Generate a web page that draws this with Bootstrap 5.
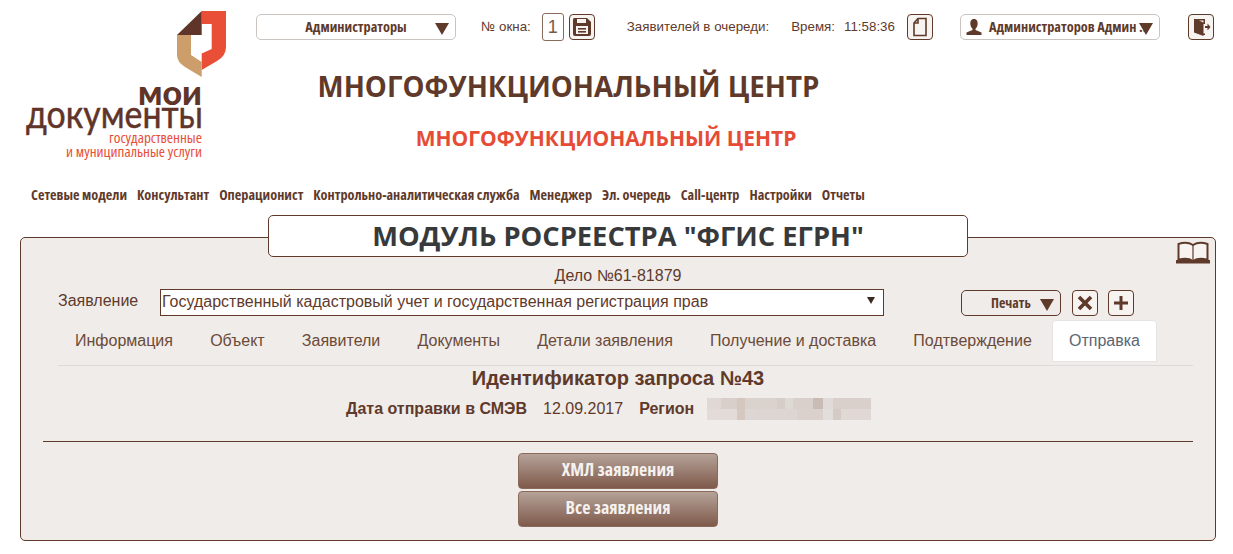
<!DOCTYPE html>
<html lang="ru">
<head>
  <meta charset="UTF-8">
  <title>Модуль Росреестра</title>
  <link href="https://cdn.jsdelivr.net/npm/bootstrap@5.3.3/dist/css/bootstrap.min.css" rel="stylesheet">
  <style>
    body { font-family: "Liberation Sans", Arial, sans-serif; color: #5f3a2b; background: #fff; font-size: 16px; }
    .narrow { font-family: "Open Sans", sans-serif; font-stretch: 75%; font-weight: 700; }
    .page-head { height: 185px; }
    .logo-box { width: 256px; flex: none; }
    .logo-box svg { display: block; }
    .logo-mark { font-family: "Lato", sans-serif; fill: #5f3429; }
    .logo-small { font-family: "Open Sans", sans-serif; font-stretch: 75%; font-size: 14px; fill: #e94e36; }
    .head-main { width: 958px; flex: none; }
    .top-bar { height: 28px; margin-top: 13px; font-size: 13.35px; }
    .drop-box { height: 26px; border: 1px solid #c9c4c0; border-radius: 5px; background: #fff; color: #5f3a2b; font-size: 14.3px; line-height: 24px; }
    .drop-group { width: 200px; text-align: center; }
    .drop-user { width: 200px; margin-left: 27px; padding-left: 4px; }
    .tri { width: 0; height: 0; border-left: 7px solid transparent; border-right: 7px solid transparent; border-top: 12px solid #5f3a2b; }
    .tri-pos { position: absolute; top: 8px; right: 6px; }
    .icon-btn { width: 26px; height: 26px; padding: 0; border: 1px solid #5f3a2b; border-radius: 4px; background: #f6f3f1; display: flex; align-items: center; justify-content: center; flex: none; }
    .win-label { margin-left: 25px; }
    .win-num { width: 22px; height: 28px; margin-left: 11px; border: 1px solid #8a6a5a; border-radius: 3px; font-size: 18px; line-height: 26px; text-align: center; color: #7a5a49; }
    .save-btn { margin-left: 5px; }
    .queue-label { margin-left: 32px; }
    .time-label { margin-left: 22px; }
    .time-value { margin-left: 9px; }
    .doc-btn { margin-left: 12px; }
    .user-name { margin-left: 6px; }
    .exit-btn { margin-left: 28px; }
    .h-main { font-family: "Open Sans", sans-serif; font-weight: 700; font-size: 27.7px; line-height: 36px; margin: 27px 0 0 0; width: 625px; text-align: center; color: #5f3a2b; }
    .h-sub { font-family: "Open Sans", sans-serif; font-weight: 700; font-size: 21px; line-height: 28px; margin: 20px 0 0 0; width: 700px; text-align: center; color: #e64c35; }
    .main-menu { padding-left: 31px; gap: 10px; font-size: 14.25px; line-height: 20px; height: 30px; }
    .main-menu a { color: #5f3a2b; text-decoration: none; }
    .title-box { width: 700px; height: 42px; margin: 0 0 -20px 268px; position: relative; z-index: 2; background: #fff; border: 1px solid #5f3a2b; border-radius: 5px; font-family: "Open Sans", sans-serif; font-weight: 700; font-size: 27.3px; line-height: 40px; text-align: center; color: #37393b; }
    .work-panel { width: 1196px; height: 304px; margin-left: 20px; background: #f0ece9; border: 1px solid #5f3a2b; border-radius: 5px; position: relative; padding-top: 28px; }
    .book-pos { position: absolute; top: 3px; right: 5px; }
    .case-no { line-height: 20px; text-align: center; }
    .case-row { padding-left: 37px; height: 27px; margin-top: 3px; }
    .case-label { width: 102px; flex: none; padding-bottom: 4px; }
    .select-wrap { width: 724px; height: 27px; flex: none; position: relative; }
    .case-select { width: 100%; height: 27px; padding: 0 0 5px 1px; border: 1px solid #5f3a2b; border-radius: 0; background: #fff; color: #5f3a2b; font-size: 16px; font-family: inherit; appearance: none; }
    .select-tri { position: absolute; top: 8px; right: 9px; border-left: 4.5px solid transparent; border-right: 4.5px solid transparent; border-top: 7px solid #3a2a22; }
    .print-box { width: 100px; height: 26px; margin-left: 77px; border: 1px solid #5f3a2b; border-radius: 5px; font-size: 14px; line-height: 24px; padding-left: 29px; position: relative; }
    .del-btn { margin-left: 11px; }
    .add-btn { margin-left: 10px; }
    .panel-tabs { margin: 4px 22px 0 37px; padding-bottom: 3px; border-bottom: 1px solid #dedad7; }
    .panel-tabs .nav-link { color: #6b4a38; padding: 9px 17px 10px; margin: 0 3.2px 0 0; border: 0; border-radius: 4px 4px 0 0; line-height: 23px; }
    .panel-tabs .nav-link.active { background: #fff; color: #5a6672; box-shadow: 0 0 0 1px #e6e3e0 inset; }
    .req-title { font-size: 20px; font-weight: 700; line-height: 24px; margin: 0; text-align: center; color: #5f3a2b; }
    .req-row { margin-top: 8px; height: 22px; padding-left: 325px; line-height: 22px; gap: 16px; }
    .blur-box { width: 164px; height: 22px; margin-left: -3px; background:
      linear-gradient(90deg, #dfd8d4 0 14px, #d8cfca 14px 30px, #d5c6be 30px 38px, #dad2cd 38px 70px, #d7cdc8 70px 78px, #dfd9d5 78px 86px, #d9d0cb 86px 106px, #c9bcb5 106px 116px, #e0dbd8 116px 126px, #d9d0cc 126px 164px) top / 100% 11px no-repeat,
      linear-gradient(90deg, #e2dbd8 0 30px, #d5c8c1 30px 38px, #dcd7d4 38px 48px, #ddd5d1 48px 90px, #dad1cc 90px 116px, #e2dedb 116px 126px, #d5cbc6 126px 134px, #dfd8d4 134px 164px) bottom / 100% 11px no-repeat; }
    .rule-line { width: 1150px; margin: 21px 0 0 22px; border-top: 1px solid #5f3a2b; }
    .action-stack { margin-top: 11px; gap: 2px; }
    .act-btn { width: 200px; height: 36px; padding: 0 0 4px; border: 1px solid #8a6a5b; border-radius: 4px; background: linear-gradient(#b5a298, #7f5a4b); color: #f5f1ee; font-size: 18px; line-height: 30px; }
    .act-btn:hover { color: #fff; background: linear-gradient(#b5a298, #7f5a4b); }
  </style>
</head>
<body>
  <div class="d-flex page-head">
    <div class="logo-box">
      <svg width="256" height="180" viewBox="0 0 256 180">
        <path d="M201.7 11H226V47Q226 56 217 61L201.7 70V53.5L211.7 49V24H201.7Z" fill="#e94e36"/>
        <path d="M201.7 11L177 35H201.7Z" fill="#5f3429"/>
        <path d="M177 35H191V55L201.7 62V77L185 67Q177 62 177 55Z" fill="#cb9e6c"/>
        <text class="logo-mark" x="202" y="105" text-anchor="end" textLength="64" lengthAdjust="spacingAndGlyphs" font-weight="900" font-size="35">мои</text>
        <text class="logo-mark" x="203" y="128" text-anchor="end" textLength="177" lengthAdjust="spacingAndGlyphs" font-size="38" stroke="#5f3429" stroke-width=".5">документы</text>
        <text class="logo-small" x="202" y="143" text-anchor="end" textLength="93" lengthAdjust="spacingAndGlyphs">государственные</text>
        <text class="logo-small" x="202" y="157" text-anchor="end" textLength="136" lengthAdjust="spacingAndGlyphs">и муниципальные услуги</text>
      </svg>
    </div>
    <div class="head-main">
      <div class="d-flex align-items-center top-bar">
        <div class="drop-box drop-group narrow position-relative">Администраторы<span class="tri tri-pos"></span></div>
        <span class="win-label">№ окна:</span>
        <div class="win-num">1</div>
        <button class="icon-btn save-btn" type="button" aria-label="Сохранить">
          <svg width="20" height="20" viewBox="0 0 20 20" fill="#5f3a2b"><path d="M2 1H15L19 5V17Q19 19 17 19H3Q1 19 1 17V3Q1 1 2 1Z"/><rect x="5" y="2" width="9" height="4" fill="#f6f3f1"/><rect x="4" y="9" width="12" height="8" fill="#f6f3f1"/><rect x="6" y="11" width="8" height="1.6"/><rect x="6" y="14" width="8" height="1.6"/></svg>
        </button>
        <span class="queue-label">Заявителей в очереди:</span>
        <span class="time-label">Время:</span>
        <span class="time-value">11:58:36</span>
        <button class="icon-btn doc-btn" type="button" aria-label="Документ">
          <svg width="20" height="20" viewBox="0 0 20 20" fill="none" stroke="#5f3a2b" stroke-width="1.6"><path d="M8 1.500H16V18.500H4V6Z"/><path d="M8 1.500V6H4"/></svg>
        </button>
        <div class="drop-box drop-user narrow position-relative d-flex align-items-center">
          <svg class="flex-shrink-0" width="18" height="18" viewBox="0 0 18 18" fill="#5f3a2b"><path d="M9 1C12 1 13 3.500 12.600 6.500C12.300 8.500 11.500 10 10.500 10.800V12L16.500 14.500V17H1.500V14.500L7.500 12V10.800C6.500 10 5.700 8.500 5.400 6.500C5 3.500 6 1 9 1Z"/></svg>
          <span class="user-name text-nowrap">Администраторов Админ ..</span><span class="tri tri-pos"></span>
        </div>
        <button class="icon-btn exit-btn" type="button" aria-label="Выход">
          <svg width="20" height="20" viewBox="0 0 20 20" fill="#5f3a2b"><path d="M3 2H14V7H12.500V3.500H8L12.500 5.500V16.500H14V13H14V18H12.500V19L3 15.500Z"/><path d="M14 9H16.500V6.500L19.500 10L16.500 13.500V11H14Z"/></svg>
        </button>
      </div>
      <h1 class="h-main">МНОГОФУНКЦИОНАЛЬНЫЙ ЦЕНТР</h1>
      <h2 class="h-sub">МНОГОФУНКЦИОНАЛЬНЫЙ ЦЕНТР</h2>
    </div>
  </div>

  <nav class="d-flex narrow main-menu">
    <a href="#">Сетевые модели</a>
    <a href="#">Консультант</a>
    <a href="#">Операционист</a>
    <a href="#">Контрольно-аналитическая служба</a>
    <a href="#">Менеджер</a>
    <a href="#">Эл. очередь</a>
    <a href="#">Call-центр</a>
    <a href="#">Настройки</a>
    <a href="#">Отчеты</a>
  </nav>

  <div class="title-box">МОДУЛЬ РОСРЕЕСТРА "ФГИС ЕГРН"</div>
  <div class="work-panel">
    <svg class="book-pos" width="34" height="23" viewBox="0 0 34 23" fill="none" stroke="#5f3a2b" stroke-width="2"><path d="M17 4C13 1.500 7 1.500 2.500 3V19C7 17.500 13 17.500 17 20C21 17.500 27 17.500 31.500 19V3C27 1.500 21 1.500 17 4Z" fill="#f6f3f1"/><path d="M17 4V20" stroke-width="1.2"/><path d="M1 20V21.500H33V20C28 18.500 21 18.500 17 21C13 18.500 6 18.500 1 20Z" fill="#5f3a2b"/></svg>
    <div class="case-no">Дело №61-81879</div>
    <div class="d-flex align-items-center case-row">
      <div class="case-label">Заявление</div>
      <div class="select-wrap">
        <select class="case-select" aria-label="Заявление">
          <option>Государственный кадастровый учет и государственная регистрация прав</option>
        </select>
        <span class="select-tri"></span>
      </div>
      <div class="print-box narrow">Печать<span class="tri tri-pos"></span></div>
      <button class="icon-btn del-btn" type="button" aria-label="Удалить">
        <svg width="18" height="18" viewBox="0 0 18 18" stroke="#5f3a2b" stroke-width="3.600" fill="none"><path d="M3 3L15 15M15 3L3 15"/></svg>
      </button>
      <button class="icon-btn add-btn" type="button" aria-label="Добавить">
        <svg width="18" height="18" viewBox="0 0 18 18" stroke="#5f3a2b" stroke-width="3" fill="none"><path d="M9 2V16M2 9H16"/></svg>
      </button>
    </div>
    <ul class="nav panel-tabs">
      <li class="nav-item"><a class="nav-link" href="#">Информация</a></li>
      <li class="nav-item"><a class="nav-link" href="#">Объект</a></li>
      <li class="nav-item"><a class="nav-link" href="#">Заявители</a></li>
      <li class="nav-item"><a class="nav-link" href="#">Документы</a></li>
      <li class="nav-item"><a class="nav-link" href="#">Детали заявления</a></li>
      <li class="nav-item"><a class="nav-link" href="#">Получение и доставка</a></li>
      <li class="nav-item"><a class="nav-link" href="#">Подтверждение</a></li>
      <li class="nav-item"><a class="nav-link active" href="#">Отправка</a></li>
    </ul>
    <h3 class="req-title">Идентификатор запроса №43</h3>
    <div class="d-flex req-row">
      <b>Дата отправки в СМЭВ</b>
      <span>12.09.2017</span>
      <b>Регион</b>
      <div class="blur-box"></div>
    </div>
    <div class="rule-line"></div>
    <div class="d-flex flex-column align-items-center action-stack">
      <button class="btn act-btn narrow" type="button">ХМЛ заявления</button>
      <button class="btn act-btn narrow" type="button">Все заявления</button>
    </div>
  </div>
  <script src="https://cdn.jsdelivr.net/npm/bootstrap@5.3.3/dist/js/bootstrap.bundle.min.js"></script>
</body>
</html>
